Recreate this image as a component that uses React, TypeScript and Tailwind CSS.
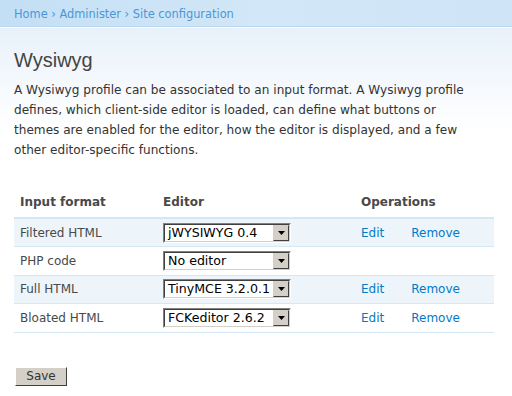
import React from "react";

const rows = [
  { format: "Filtered HTML", editor: "jWYSIWYG 0.4", ops: true },
  { format: "PHP code", editor: "No editor", ops: false },
  { format: "Full HTML", editor: "TinyMCE 3.2.0.1", ops: true },
  { format: "Bloated HTML", editor: "FCKeditor 2.6.2", ops: true },
];

function FakeSelect({ value }: { value: string }) {
  return (
    <div className="flex h-[20px] w-[128px] border border-t-[#808080] border-l-[#808080] border-r-white border-b-white bg-white">
      <div className="flex flex-1 border border-t-[#404040] border-l-[#404040] border-r-[#d4d0c8] border-b-[#d4d0c8]">
        <span className="flex-1 overflow-hidden whitespace-nowrap pl-[3px] text-[12.6px] leading-[16px] text-black">{value}</span>
        <div className="flex h-[16px] w-[16px] shrink-0 items-center justify-center border border-t-[#d4d0c8] border-l-[#d4d0c8] border-r-[#404040] border-b-[#404040] bg-[#d4d0c8]">
          <svg width="7" height="4" viewBox="0 0 7 4">
            <path d="M0 0h7L3.5 4z" fill="#000" />
          </svg>
        </div>
      </div>
    </div>
  );
}

export default function App() {
  return (
    <div className="min-h-[396px] w-[512px] bg-white font-['DejaVu_Sans',Verdana,sans-serif] text-[#494949]">
      <div className="h-[27px] border-b border-[#bcd8ee] bg-gradient-to-r from-[#c3dff5] via-[#d2e7f7] to-[#cfe5f7] pl-[14px] pt-[6px] text-[11.4px] text-[#4a97d7]">
        Home › Administer › Site configuration
      </div>
      <div className="h-px bg-white" />
      <div className="bg-gradient-to-b from-[#e8f1fa] to-white to-[100px] px-[14px] pt-[20px]">
        <h2 className="font-['Liberation_Sans',Arial,sans-serif] text-[20px] leading-[24px] text-[#444]">Wysiwyg</h2>
        <p className="mt-[8px] w-[467px] text-[12.1px] leading-[20px] text-[#333]">
          A Wysiwyg profile can be associated to an input format. A Wysiwyg profile defines, which client-side editor is loaded, can define what buttons or themes are enabled for the editor, how the editor is displayed, and a few other editor-specific functions.
        </p>
        <table className="mt-[33px] w-[480px] border-collapse text-[12px]">
          <thead>
            <tr className="border-b-2 border-[#d3e7f4] text-left">
              <th className="w-[149px] px-[6px] pb-[6px] font-bold">Input format</th>
              <th className="w-[192px] px-0 pb-[6px] font-bold">Editor</th>
              <th className="px-[6px] pb-[6px] font-bold">Operations</th>
            </tr>
          </thead>
          <tbody>
            {rows.map((r, i) => (
              <tr key={r.format} className={`h-[28.5px] border-b border-[#d3e7f4] ${i % 2 === 0 ? "bg-[#edf5fa]" : "bg-white"}`}>
                <td className="px-[6px]">{r.format}</td>
                <td className="px-0">
                  <FakeSelect value={r.editor} />
                </td>
                <td className="px-[6px] text-[#027ac6]">
                  {r.ops && (
                    <span className="flex gap-[27px]">
                      <span>Edit</span>
                      <span>Remove</span>
                    </span>
                  )}
                </td>
              </tr>
            ))}
          </tbody>
        </table>
        <button className="mt-[34px] ml-px h-[19px] w-[52px] border border-t-white border-l-white border-r-[#404040] border-b-[#404040] bg-[#d4d0c8] text-[12px] leading-[15px] text-[#333]">
          Save
        </button>
      </div>
    </div>
  );
}
